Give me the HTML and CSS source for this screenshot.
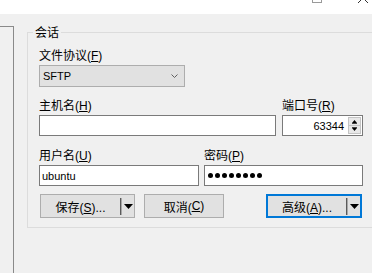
FILE: index.html
```html
<!doctype html>
<html>
<head>
<meta charset="utf-8">
<title>会话</title>
<link rel="stylesheet" href="styles.css">
</head>
<body>
<div class="titlebar">
	<svg class="winbtns" width="60" height="14" viewBox="0 0 60 14">
		<rect x="0.5" y="-8.5" width="9" height="11" fill="none" stroke="#9a9a9a"/>
		<path d="M46 -7L56 3M56 -7L46 3" stroke="#333" stroke-width="1" fill="none"/>
	</svg>
</div>
<div class="main">
	<div class="tree"></div>
	<div class="group">
		<div class="legend">会话</div>
		<div class="field first">
			<div class="lbl">文件协议(<u>F</u>)</div>
			<div class="select">
				<span>SFTP</span>
				<svg width="7" height="4" viewBox="0 0 7 4"><polyline points="0.5,0.5 3.5,3.5 6.5,0.5" fill="none" stroke="#606060"/></svg>
			</div>
		</div>
		<div class="row host">
			<div class="field hostname">
				<div class="lbl">主机名(<u>H</u>)</div>
				<div class="input"></div>
			</div>
			<div class="field port">
				<div class="lbl">端口号(<u>R</u>)</div>
				<div class="input num">
					<span>63344</span>
					<svg class="spin" width="13" height="17" viewBox="0 0 13 17">
						<rect x="0.5" y="0.5" width="12" height="16" fill="#e8e8e8" stroke="#c4c4c4"/>
						<path d="M0.5 8.5H12.5" stroke="#c4c4c4"/>
						<path d="M4 6h5L6.5 3z" fill="#000"/>
						<path d="M4 6.5h5" stroke="#444"/>
						<path d="M4 11h5l-2.5 3z" fill="#000"/>
						<path d="M4 10.5h5" stroke="#444"/>
					</svg>
				</div>
			</div>
		</div>
		<div class="row user">
			<div class="field username">
				<div class="lbl">用户名(<u>U</u>)</div>
				<div class="input">ubuntu</div>
			</div>
			<div class="field password">
				<div class="lbl">密码(<u>P</u>)</div>
				<div class="input dots">
					<i></i><i></i><i></i><i></i><i></i><i></i><i></i><i></i>
				</div>
			</div>
		</div>
		<div class="buttons">
			<div class="btn split save">
				<span class="btn-text">保存(<u>S</u>)...</span>
				<span class="drop"><svg width="9" height="5" viewBox="0 0 9 5"><path d="M0 0h9L4.5 5z" fill="#000"/></svg></span>
			</div>
			<div class="btn cancel">取消(<u>C</u>)</div>
			<div class="btn split adv">
				<span class="btn-text">高级(<u>A</u>)...</span>
				<span class="drop"><svg width="9" height="5" viewBox="0 0 9 5"><path d="M0 0h9L4.5 5z" fill="#000"/></svg></span>
			</div>
		</div>
	</div>
</div>
</body>
</html>
```

FILE: styles.css
```css
*{margin:0;padding:0;box-sizing:border-box}
body{width:372px;height:273px;overflow:hidden;background:#f0f0f0;color:#000;font:12px "Liberation Sans","Noto Sans CJK SC",sans-serif}
u{text-decoration:underline;text-underline-offset:1px}
.titlebar{height:14px;background:#fff;display:flex;justify-content:flex-end}
.winbtns{display:block}
.main{display:flex;align-items:flex-start;height:259px}
.tree{flex:none;width:14px;height:247px;margin-top:12px;border-top:1px solid #8a8a8a;border-right:1px solid #8a8a8a}
.group{flex:none;width:356px;margin:18px 0 0 13px;padding:0 20px 9px 11px;border:1px solid #dcdcdc;border-right:none}
.legend{width:fit-content;margin:-7px 0 0 -6px;padding:0 2px;height:14px;line-height:14px;background:#f0f0f0}
.lbl{height:14px;line-height:14px;margin-bottom:2px;white-space:nowrap}
.field.first{margin-top:9px}
.select{width:146px;height:22px;border:1px solid #adadad;background:#e1e1e1;display:flex;align-items:center;justify-content:space-between;padding:0 6px 0 3px;font-size:11px}
.select svg{display:block}
.row{display:flex}
.row.host{margin-top:12px;gap:6px}
.row.user{margin-top:13px;gap:5px}
.hostname{width:237px}
.port{width:81px}
.username{width:160px}
.password{width:159px}
.input{height:21px;border:1px solid #7a7a7a;background:#fff;padding:0 2px;display:flex;align-items:center;font-size:11px}
.input.num{justify-content:flex-end;padding:0 1px 0 2px}
.spin{display:block;margin-left:4px}
.dots{gap:2px;padding-left:3px}
.dots i{width:5px;height:5px;border-radius:50%;background:#000}
.buttons{display:flex;margin-top:8px}
.btn{height:24px;border:1px solid #adadad;background:#e1e1e1;display:flex;align-items:center;justify-content:center;white-space:nowrap}
.btn.split{justify-content:flex-start}
.btn-text{flex:1;text-align:center}
.drop{width:14px;height:17px;display:flex;align-items:center;padding-left:3px;border-left:1px solid #5a5a5a;box-shadow:inset 1px 0 #a8a8a8}
.drop svg{display:block}
.save{width:95px;margin-left:1px}
.cancel{width:80px;margin-left:9px}
.adv{width:96px;margin-left:auto;margin-right:1px;border:2px solid #0078d7}
```
